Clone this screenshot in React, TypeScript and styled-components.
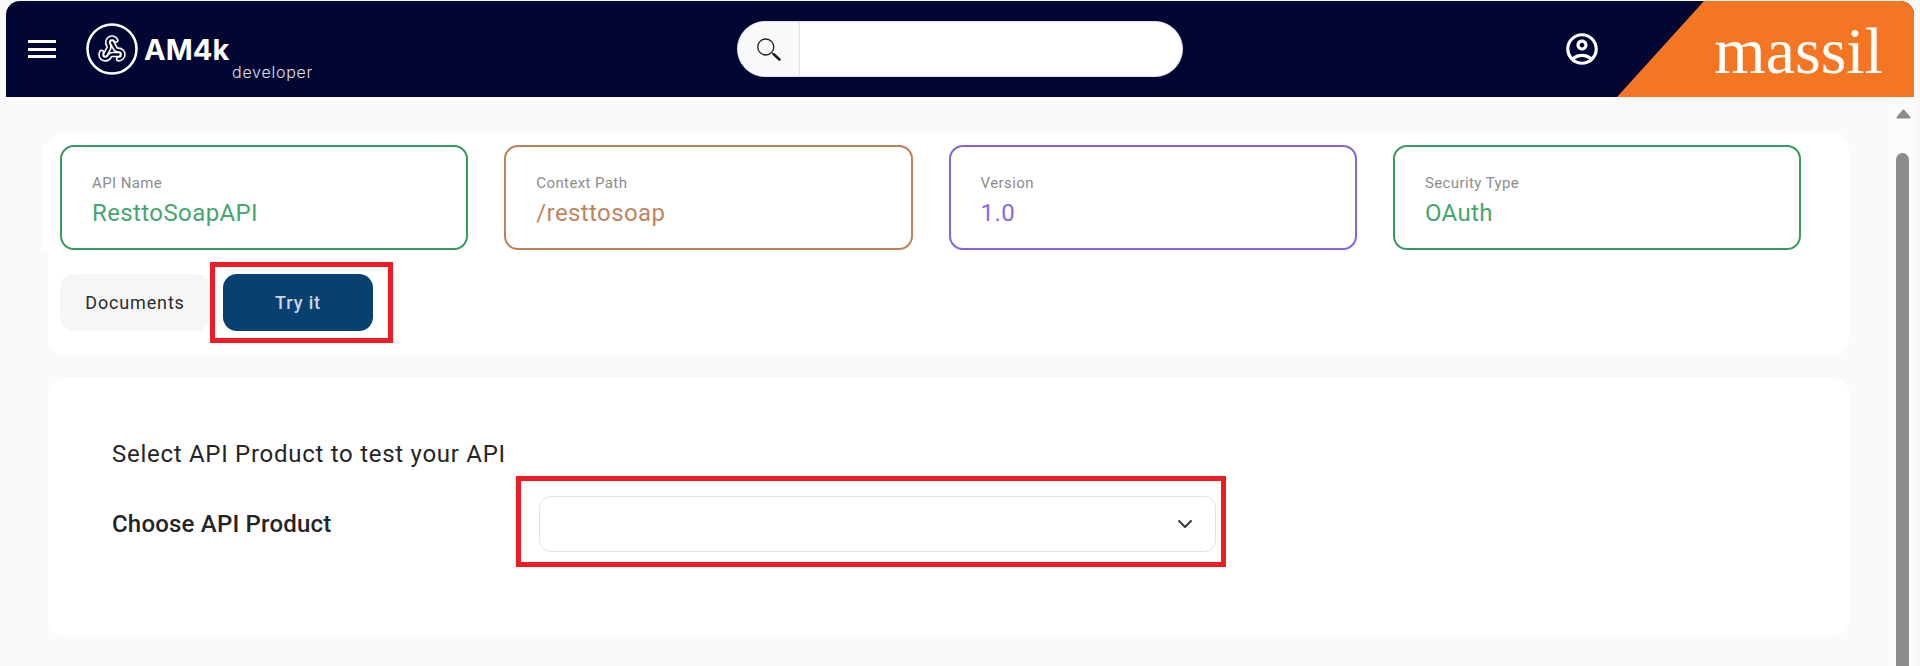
import React from "react";
import styled, { createGlobalStyle } from "styled-components";
import { MdOutlineAccountCircle } from "react-icons/md";

const Global = createGlobalStyle`
  html, body { margin: 0; padding: 0; height: 666px; overflow: hidden; background: #f8f8f8; }
  * { box-sizing: border-box; }
  #root { height: 666px; }
`;

const Shell = styled.div`
  height: 666px;
  padding: 1px 6px 0;
  display: flex;
  flex-direction: column;
  font-family: Roboto, "Liberation Sans", sans-serif;
`;

const Header = styled.header`
  height: 96px;
  flex: none;
  display: flex;
  align-items: stretch;
  background: #010633;
  border-radius: 14px 14px 0 0;
  overflow: hidden;
  color: #fff;
`;

const Menu = styled.button`
  width: 28px;
  height: 18px;
  margin: 39px 0 0 22px;
  padding: 0;
  border: 0;
  background: none;
  display: flex;
  flex-direction: column;
  justify-content: space-between;
  flex: none;
`;

const MenuBar = styled.span`
  display: block;
  height: 3px;
  background: #fff;
`;

const Logo = styled.div`
  display: flex;
  margin: 22px 0 0 30px;
  flex: none;
  width: 651px;
`;

const LogoMark = styled.svg`
  width: 52px;
  height: 52px;
  flex: none;
`;

const Wordmark = styled.div`
  margin-left: 6px;
  display: flex;
  flex-direction: column;
`;

const WordmarkTitle = styled.span`
  font-family: Inter, sans-serif;
  font-weight: 700;
  font-size: 29px;
  line-height: 36px;
  letter-spacing: 0.1px;
  margin-top: 9px;
`;

const WordmarkSub = styled.span`
  font-family: Inter, sans-serif;
  font-weight: 300;
  font-size: 16px;
  line-height: 18px;
  letter-spacing: 0.75px;
  color: #dfe0e6;
  margin: -5px 0 0 88px;
  white-space: nowrap;
`;

const Search = styled.div`
  width: 446px;
  height: 56px;
  margin-top: 20px;
  flex: none;
  display: flex;
  background: #fff;
  border: 1px solid #dee2e6;
  border-radius: 28px;
  overflow: hidden;
`;

const SearchAddon = styled.span`
  width: 62px;
  flex: none;
  background: #f8f9fa;
  border-right: 1px solid #dee2e6;
  display: flex;
  align-items: center;
  justify-content: center;
`;

const SearchInput = styled.input`
  flex: 1;
  min-width: 0;
  border: 0;
  outline: 0;
  background: transparent;
`;

const UserButton = styled.span`
  margin: 29px 0 0 380px;
  width: 38px;
  height: 38px;
  flex: none;
  display: flex;
  color: #fff;
`;

const Brand = styled.div`
  margin-left: auto;
  width: 297px;
  flex: none;
  background: #f47622;
  clip-path: polygon(87px 0, 100% 0, 100% 100%, 0 100%);
  display: flex;
  justify-content: flex-end;
  font-family: "Liberation Serif", serif;
  font-size: 66px;
  line-height: 99px;
  padding: 0 31px 0 0;
  color: #fff;
`;

const Body = styled.div`
  flex: 1;
  min-height: 0;
  display: flex;
  background: #fafafa;
  overflow: hidden;
`;

const Content = styled.main`
  flex: 1;
  min-width: 0;
  padding: 36px 42px 0;
  display: flex;
  flex-direction: column;
  gap: 23px;
`;

const Card = styled.section`
  background: #fff;
  border-radius: 16px;
`;

const SummaryCard = styled(Card)`
  padding: 12px 12px 24px;
`;

const InfoRow = styled.div`
  display: grid;
  grid-template-columns: repeat(4, 408.3px);
  gap: 36px;
  margin-left: -18px;
  padding-left: 18px;
  background: #fff;
`;

const InfoBox = styled.div<{ $color: string; $text: string }>`
  height: 105px;
  border: 2px solid ${(p) => p.$color};
  border-radius: 14px;
  padding: 27px 30px 0;
  color: ${(p) => p.$text};
`;

const InfoLabel = styled.div`
  font-size: 15px;
  line-height: 18px;
  letter-spacing: 0.4px;
  color: #8c8c8c;
`;

const InfoValue = styled.div`
  font-size: 24px;
  line-height: 30px;
  letter-spacing: 0.4px;
  margin-top: 6px;
`;

const Tabs = styled.div`
  display: flex;
  gap: 13px;
  margin-top: 24px;
`;

const Tab = styled.button<{ $active?: boolean }>`
  width: 150px;
  height: 57px;
  border: 0;
  border-radius: 14px;
  font-family: inherit;
  font-size: 18px;
  font-weight: ${(p) => (p.$active ? 500 : 400)};
  letter-spacing: 0.85px;
  background: ${(p) => (p.$active ? "#074170" : "#f6f6f6")};
  color: ${(p) => (p.$active ? "#cfd8e2" : "#2b2b2b")};
`;

const Marked = styled.div`
  position: relative;
`;

const Callout = styled.span<{ $t: number; $r: number; $b: number; $l: number }>`
  position: absolute;
  top: ${(p) => -p.$t}px;
  right: ${(p) => -p.$r}px;
  bottom: ${(p) => -p.$b}px;
  left: ${(p) => -p.$l}px;
  border: 5px solid #ee1c25;
  pointer-events: none;
`;

const ProductCard = styled(Card)`
  height: 258px;
  padding: 63px 64px 0;
  color: #252525;
`;

const ProductTitle = styled.div`
  font-size: 24px;
  line-height: 26px;
  letter-spacing: 0.72px;
`;

const ProductRow = styled.div`
  display: flex;
  align-items: center;
  margin-top: 29px;
`;

const ProductLabel = styled.label`
  width: 427px;
  font-size: 24px;
  font-weight: 500;
  letter-spacing: 0.2px;
  flex: none;
`;

const Select = styled.div`
  width: 677px;
  height: 56px;
  border: 1.5px solid #dee2e6;
  border-radius: 12px;
  background: #fff;
  display: flex;
  align-items: center;
  justify-content: flex-end;
  padding-right: 22px;
`;

const Scrollbar = styled.aside`
  width: 23px;
  flex: none;
  background: #fbfbfb;
  padding: 12px 0 0 5px;
  display: flex;
  flex-direction: column;
`;

const ScrollArrow = styled.svg`
  width: 15px;
  height: 10px;
  flex: none;
`;

const ScrollThumb = styled.div`
  width: 13px;
  flex: 1;
  margin-top: 34px;
  background: #8c8c8c;
  border-radius: 7px 7px 0 0;
`;

const info = [
  { label: "API Name", value: "ResttoSoapAPI", color: "#379a63", text: "#46a66f" },
  { label: "Context Path", value: "/resttosoap", color: "#bd8058", text: "#c08560" },
  { label: "Version", value: "1.0", color: "#8463dc", text: "#8a68e0" },
  { label: "Security Type", value: "OAuth", color: "#379a63", text: "#46a66f" },
];

const hooks = [
  "M18 16.98h-5.99c-1.1 0-1.95.94-2.48 1.9A4 4 0 0 1 2 17c.01-.7.2-1.4.57-2",
  "m6 17 3.13-5.78c.53-.97.1-2.18-.5-3.1a4 4 0 1 1 6.89-4.06",
  "m12 6 3.13 5.73C15.66 12.7 16.9 13 18 13a4 4 0 0 1 0 8",
];

export default function App() {
  return (
    <Shell>
      <Global />
      <Header>
        <Menu aria-label="menu">
          <MenuBar />
          <MenuBar />
          <MenuBar />
        </Menu>
        <Logo>
          <LogoMark viewBox="0 0 52 52" fill="none" stroke="#fff">
            <circle cx="26" cy="26" r="24.5" strokeWidth="2.6" />
            <g transform="translate(12.8 12.8) scale(1.1)" strokeLinecap="round" strokeLinejoin="round">
              {hooks.map((d) => (
                <path key={d} d={d} strokeWidth="5" />
              ))}
              {hooks.map((d) => (
                <path key={d} d={d} strokeWidth="2.1" stroke="#010633" />
              ))}
            </g>
          </LogoMark>
          <Wordmark>
            <WordmarkTitle>AM4k</WordmarkTitle>
            <WordmarkSub>developer</WordmarkSub>
          </Wordmark>
        </Logo>
        <Search>
          <SearchAddon>
            <svg width="24" height="24" viewBox="0 0 24 24" fill="none" stroke="#1c1c1c">
              <circle cx="8.8" cy="10" r="8" strokeWidth="1.3" />
              <path d="M15 16l2 1.5" strokeWidth="1.3" />
              <path d="M17 17.5l5.5 5" strokeWidth="2.6" strokeLinecap="round" />
            </svg>
          </SearchAddon>
          <SearchInput aria-label="search" />
        </Search>
        <UserButton>
          <MdOutlineAccountCircle size={38} />
        </UserButton>
        <Brand>massil</Brand>
      </Header>
      <Body>
        <Content>
          <SummaryCard>
            <InfoRow>
              {info.map((i) => (
                <InfoBox key={i.label} $color={i.color} $text={i.text}>
                  <InfoLabel>{i.label}</InfoLabel>
                  <InfoValue>{i.value}</InfoValue>
                </InfoBox>
              ))}
            </InfoRow>
            <Tabs>
              <Tab>Documents</Tab>
              <Marked>
                <Tab $active>Try it</Tab>
                <Callout $t={12} $r={20} $b={12} $l={13} />
              </Marked>
            </Tabs>
          </SummaryCard>
          <ProductCard>
            <ProductTitle>Select API Product to test your API</ProductTitle>
            <ProductRow>
              <ProductLabel>Choose API Product</ProductLabel>
              <Marked>
                <Select>
                  <svg width="16" height="16" viewBox="0 0 16 16" fill="none" stroke="#343a40" strokeWidth="2" strokeLinecap="round" strokeLinejoin="round">
                    <path d="m2 5 6 6 6-6" />
                  </svg>
                </Select>
                <Callout $t={20} $r={10} $b={15} $l={23} />
              </Marked>
            </ProductRow>
          </ProductCard>
        </Content>
        <Scrollbar>
          <ScrollArrow viewBox="0 0 15 10">
            <path d="M7.5 1.5L13.5 8.5H1.5Z" fill="#8c8c8c" stroke="#8c8c8c" strokeWidth="2" strokeLinejoin="round" />
          </ScrollArrow>
          <ScrollThumb />
        </Scrollbar>
      </Body>
    </Shell>
  );
}
